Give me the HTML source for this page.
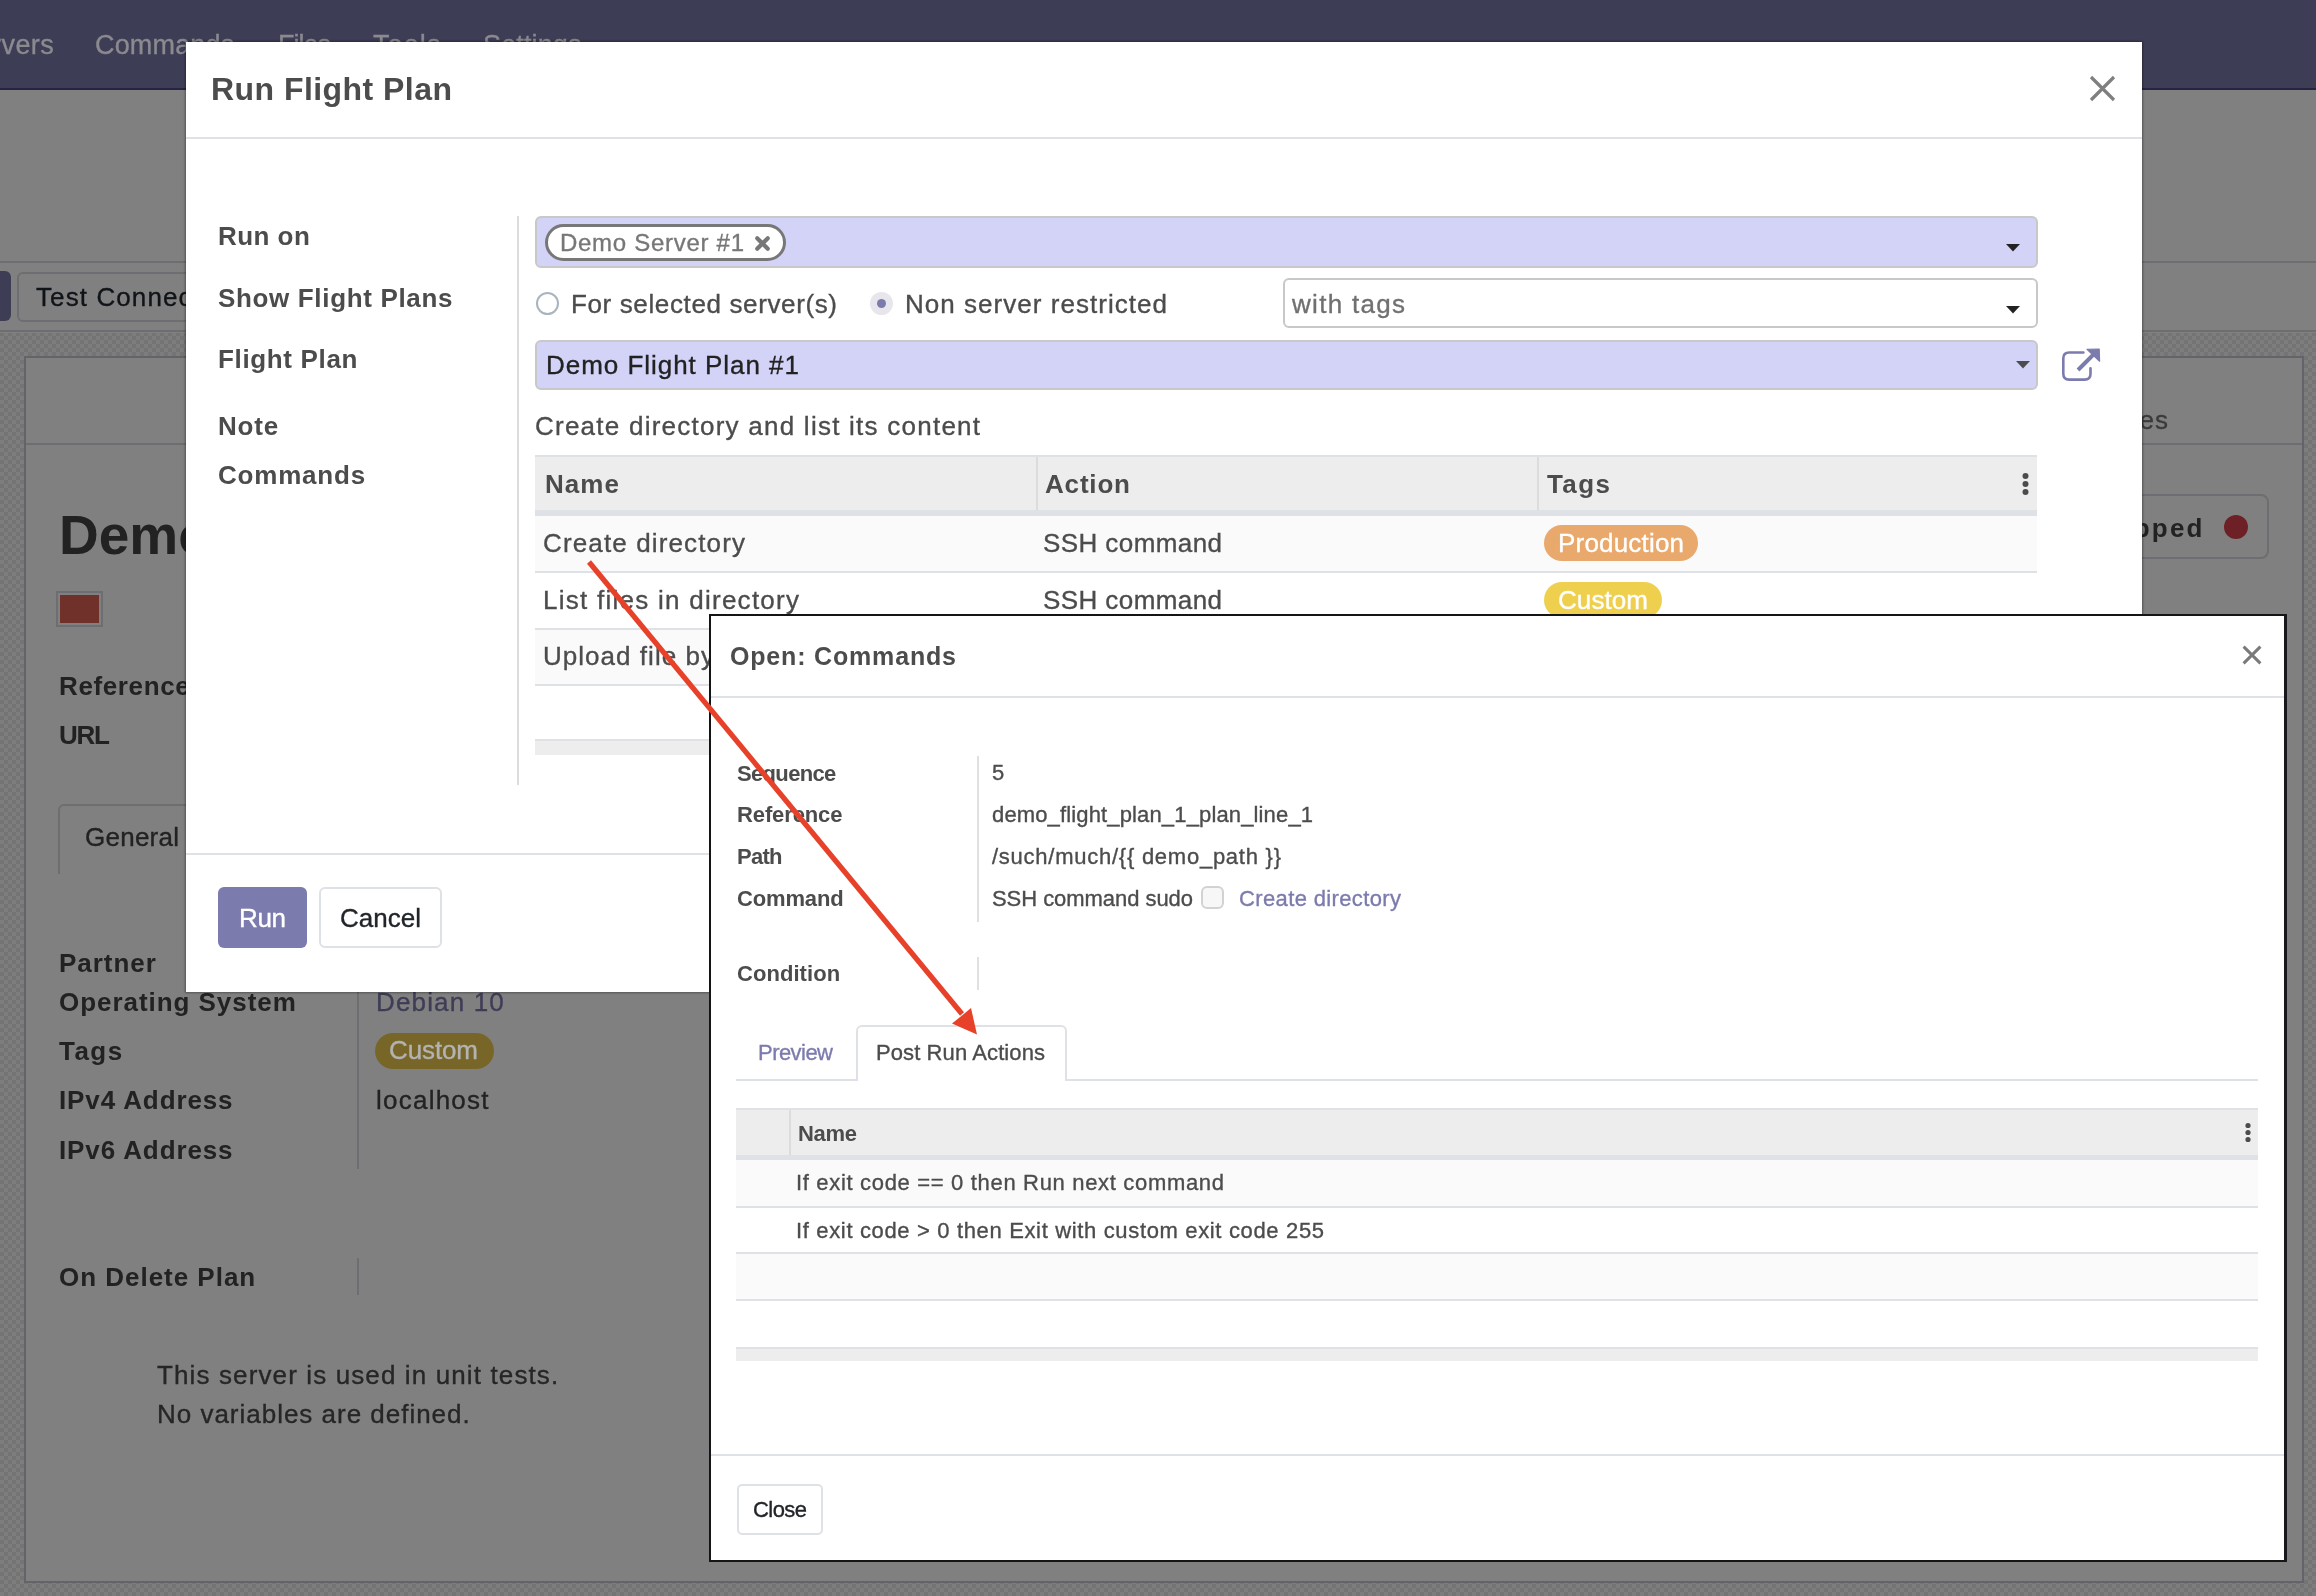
<!DOCTYPE html>
<html><head><meta charset="utf-8"><style>
html,body{margin:0;padding:0;width:2316px;height:1596px;overflow:hidden;}
body{position:relative;font-family:'Liberation Sans', sans-serif;background:#7a7a7a;}
.t{position:absolute;white-space:pre;line-height:normal;will-change:transform;-webkit-text-stroke:0.35px currentColor;}
.a{position:absolute;box-sizing:border-box;}
</style></head><body>
<div class="a" style="left:0px;top:0px;width:2316px;height:1596px;background-color:#787878;background-image:conic-gradient(#747474 25%,#7d7d7d 0 50%,#747474 0 75%,#7d7d7d 0);background-size:8px 8px"></div>
<div class="a" style="left:0px;top:90px;width:2316px;height:243px;background:#808080"></div>
<div class="a" style="left:0px;top:261px;width:2316px;height:2px;background:#6e6e72"></div>
<div class="a" style="left:0px;top:330px;width:2316px;height:2px;background:#6e6e72"></div>
<div class="a" style="left:0px;top:0px;width:2316px;height:90px;background:#3e3d56"></div>
<div class="a" style="left:0px;top:88px;width:2316px;height:2px;background:#262440"></div>
<div class="t" style="left:-8.30px;top:29.56px;font-size:27px;color:#8a8a8f;letter-spacing:0.450px;">rvers</div>
<div class="t" style="left:95.00px;top:29.56px;font-size:27px;color:#8a8a8f;letter-spacing:0.165px;">Commands</div>
<div class="t" style="left:278.00px;top:29.56px;font-size:27px;color:#8a8a8f;letter-spacing:-1.004px;">Files</div>
<div class="t" style="left:373.00px;top:29.56px;font-size:27px;color:#8a8a8f;letter-spacing:1.092px;">Tools</div>
<div class="t" style="left:483.00px;top:29.56px;font-size:27px;color:#8a8a8f;letter-spacing:0.120px;">Settings</div>
<div class="a" style="left:-10px;top:271px;width:21px;height:50px;background:#3e3d56;border-radius:6px"></div>
<div class="a" style="left:17px;top:272px;width:400px;height:50px;border:2px solid #6e6e72;border-radius:6px;background:#808080"></div>
<div class="t" style="left:36.00px;top:282.47px;font-size:26px;color:#101418;letter-spacing:1.097px;">Test Connection</div>
<div class="a" style="left:24px;top:356px;width:2280px;height:1227px;background:#808080;border:2px solid #636369"></div>
<div class="a" style="left:26px;top:443px;width:2276px;height:2px;background:#6e6e72"></div>
<div class="t" style="left:2052.51px;top:404.97px;font-size:26px;color:#3a3a3a;letter-spacing:1.065px;">Variables</div>
<div class="a" style="left:1980px;top:494px;width:289px;height:65px;border:2px solid #6e6e72;border-radius:8px"></div>
<div class="t" style="left:2085.48px;top:513.47px;font-size:26px;color:#222;font-weight:700;-webkit-text-stroke:0;letter-spacing:2.253px;">Stopped</div>
<div class="a" style="left:2224px;top:515px;width:24px;height:24px;background:#6d2126;border-radius:50%"></div>
<div class="t" style="left:59.00px;top:502.73px;font-size:55px;color:#222;font-weight:700;-webkit-text-stroke:0;">Demo Server #1</div>
<div class="a" style="left:56px;top:591px;width:47px;height:36px;border:2px solid #6e6e72;background:#6f3129;box-shadow:inset 0 0 0 2px #808080"></div>
<div class="t" style="left:59.00px;top:670.97px;font-size:26px;color:#222;font-weight:700;-webkit-text-stroke:0;letter-spacing:0.629px;">Reference</div>
<div class="t" style="left:59.00px;top:720.07px;font-size:26px;color:#222;font-weight:700;-webkit-text-stroke:0;letter-spacing:-1.319px;">URL</div>
<div class="a" style="left:58px;top:804px;width:400px;height:70px;border:2px solid #6e6e72;border-bottom:none;border-radius:6px 6px 0 0"></div>
<div class="t" style="left:84.50px;top:822.47px;font-size:26px;color:#222;letter-spacing:0.250px;">General</div>
<div class="t" style="left:58.50px;top:948.47px;font-size:26px;color:#222;font-weight:700;-webkit-text-stroke:0;letter-spacing:0.959px;">Partner</div>
<div class="t" style="left:58.50px;top:987.47px;font-size:26px;color:#222;font-weight:700;-webkit-text-stroke:0;letter-spacing:0.952px;">Operating System</div>
<div class="t" style="left:58.50px;top:1035.97px;font-size:26px;color:#222;font-weight:700;-webkit-text-stroke:0;letter-spacing:1.478px;">Tags</div>
<div class="t" style="left:58.50px;top:1085.47px;font-size:26px;color:#222;font-weight:700;-webkit-text-stroke:0;letter-spacing:0.891px;">IPv4 Address</div>
<div class="t" style="left:58.50px;top:1135.27px;font-size:26px;color:#222;font-weight:700;-webkit-text-stroke:0;letter-spacing:0.891px;">IPv6 Address</div>
<div class="a" style="left:357px;top:935px;width:2px;height:234px;background:#6e6e72"></div>
<div class="t" style="left:375.50px;top:987.47px;font-size:26px;color:#3e3d56;letter-spacing:1.157px;">Debian 10</div>
<div class="a" style="left:375px;top:1033px;width:119px;height:36px;background:#786629;border-radius:18px"></div>
<div class="t" style="left:389.00px;top:1035.47px;font-size:26px;color:#b3b3b3;letter-spacing:-0.116px;">Custom</div>
<div class="t" style="left:375.50px;top:1085.47px;font-size:26px;color:#222;letter-spacing:1.234px;">localhost</div>
<div class="t" style="left:58.50px;top:1262.47px;font-size:26px;color:#222;font-weight:700;-webkit-text-stroke:0;letter-spacing:0.977px;">On Delete Plan</div>
<div class="a" style="left:357px;top:1258px;width:2px;height:37px;background:#6e6e72"></div>
<div class="t" style="left:156.50px;top:1360.47px;font-size:26px;color:#262626;letter-spacing:1.123px;">This server is used in unit tests.</div>
<div class="t" style="left:156.50px;top:1398.97px;font-size:26px;color:#262626;letter-spacing:0.985px;">No variables are defined.</div>
<div class="a" style="left:186px;top:42px;width:1956px;height:950px;background:#fff;box-shadow:0 0 2px 1px rgba(0,0,0,.35)"></div>
<div class="t" style="left:211.00px;top:71.04px;font-size:32px;color:#4c4c4c;font-weight:700;-webkit-text-stroke:0;letter-spacing:0.454px;">Run Flight Plan</div>
<svg class="a" style="left:2088px;top:74px" width="29" height="29"><path d="M3 3L26 26M26 3L3 26" stroke="#7f7f7f" stroke-width="3.2"/></svg>
<div class="a" style="left:186px;top:137px;width:1956px;height:2px;background:#dee2e6"></div>
<div class="t" style="left:218.00px;top:221.47px;font-size:26px;color:#4c4c4c;font-weight:700;-webkit-text-stroke:0;letter-spacing:0.454px;">Run on</div>
<div class="t" style="left:218.00px;top:283.47px;font-size:26px;color:#4c4c4c;font-weight:700;-webkit-text-stroke:0;letter-spacing:0.656px;">Show Flight Plans</div>
<div class="t" style="left:218.00px;top:344.47px;font-size:26px;color:#4c4c4c;font-weight:700;-webkit-text-stroke:0;letter-spacing:0.651px;">Flight Plan</div>
<div class="t" style="left:218.00px;top:411.47px;font-size:26px;color:#4c4c4c;font-weight:700;-webkit-text-stroke:0;letter-spacing:0.840px;">Note</div>
<div class="t" style="left:218.00px;top:460.07px;font-size:26px;color:#4c4c4c;font-weight:700;-webkit-text-stroke:0;letter-spacing:0.803px;">Commands</div>
<div class="a" style="left:517px;top:216px;width:2px;height:569px;background:#dcdcdc"></div>
<div class="a" style="left:535px;top:216px;width:1503px;height:52px;background:#d3d2f7;border:2px solid #c8c8c8;border-radius:6px"></div>
<div class="a" style="left:545px;top:224px;width:241px;height:37px;background:#fff;border:3.6px solid #777;border-radius:18.5px"></div>
<div class="t" style="left:560.00px;top:228.88px;font-size:24px;color:#777;letter-spacing:0.712px;">Demo Server #1</div>
<svg class="a" style="left:754px;top:234.5px" width="17" height="17"><path d="M3.2 3.2L13.8 13.8M13.8 3.2L3.2 13.8" stroke="#777" stroke-width="4.2" stroke-linecap="round"/></svg>
<svg class="a" style="left:2006px;top:244px" width="14" height="8"><path d="M0 0H14L7 7.5Z" fill="#222"/></svg>
<div class="a" style="left:535.5px;top:291.5px;width:23px;height:23px;border:2px solid #a9b4bf;border-radius:50%;background:#fff"></div>
<div class="t" style="left:571.00px;top:289.07px;font-size:26px;color:#4c4c4c;letter-spacing:0.626px;">For selected server(s)</div>
<div class="a" style="left:869.5px;top:291.5px;width:23px;height:23px;background:#e6e6ec;border-radius:50%"></div>
<div class="a" style="left:876.5px;top:298.5px;width:9px;height:9px;background:#7c7bad;border-radius:50%"></div>
<div class="t" style="left:905.00px;top:289.07px;font-size:26px;color:#4c4c4c;letter-spacing:1.034px;">Non server restricted</div>
<div class="a" style="left:1283px;top:278px;width:755px;height:50px;background:#fff;border:2px solid #c8c8c8;border-radius:6px"></div>
<div class="t" style="left:1292.00px;top:289.07px;font-size:26px;color:#707070;letter-spacing:1.299px;">with tags</div>
<svg class="a" style="left:2006px;top:306px" width="14" height="8"><path d="M0 0H14L7 7.5Z" fill="#222"/></svg>
<div class="a" style="left:535px;top:339.5px;width:1503px;height:50px;background:#d3d2f7;border:2px solid #c8c8c8;border-radius:6px"></div>
<div class="t" style="left:546.00px;top:350.47px;font-size:26px;color:#222;letter-spacing:0.969px;">Demo Flight Plan #1</div>
<svg class="a" style="left:2016px;top:361px" width="14" height="8"><path d="M0 0H14L7 7.5Z" fill="#4c4c4c"/></svg>
<svg class="a" style="left:2050px;top:340px" width="60" height="50" viewBox="0 0 60 50"><path d="M33.4 12.5H19.2Q13.3 12.5 13.3 18.4V33.8Q13.3 39.6 19.2 39.6H34.6Q40.5 39.6 40.5 33.8V28.2" fill="none" stroke="#7c7bad" stroke-width="2.6" stroke-linecap="round"/><path d="M28 30L44 14" stroke="#7c7bad" stroke-width="3.9"/><path d="M37 9.4L49.2 9L49.6 21.2Z" fill="#7c7bad" stroke="#7c7bad" stroke-width="1.2" stroke-linejoin="round"/></svg>
<div class="t" style="left:535.00px;top:410.97px;font-size:26px;color:#4c4c4c;letter-spacing:1.242px;">Create directory and list its content</div>
<div class="a" style="left:535px;top:455px;width:1502px;height:55px;background:#ededed;border-top:2px solid #dee2e6"></div>
<div class="a" style="left:1036px;top:457px;width:2px;height:53px;background:#dcdcdc"></div>
<div class="a" style="left:1537px;top:457px;width:2px;height:53px;background:#dcdcdc"></div>
<div class="a" style="left:535px;top:510px;width:1502px;height:6px;background:#dee2e6"></div>
<div class="t" style="left:545.00px;top:469.47px;font-size:26px;color:#4c4c4c;font-weight:700;-webkit-text-stroke:0;letter-spacing:1.057px;">Name</div>
<div class="t" style="left:1045.00px;top:469.47px;font-size:26px;color:#4c4c4c;font-weight:700;-webkit-text-stroke:0;letter-spacing:0.822px;">Action</div>
<div class="t" style="left:1547.00px;top:469.47px;font-size:26px;color:#4c4c4c;font-weight:700;-webkit-text-stroke:0;letter-spacing:1.411px;">Tags</div>
<svg class="a" style="left:2021px;top:472px" width="9" height="24"><circle cx="4.5" cy="4" r="3" fill="#4c4c4c"/><circle cx="4.5" cy="12" r="3" fill="#4c4c4c"/><circle cx="4.5" cy="20" r="3" fill="#4c4c4c"/></svg>
<div class="a" style="left:535px;top:516px;width:1502px;height:56px;background:#fafafa"></div>
<div class="a" style="left:535px;top:571px;width:1502px;height:2px;background:#dee2e6"></div>
<div class="a" style="left:535px;top:628px;width:1502px;height:2px;background:#dee2e6"></div>
<div class="a" style="left:535px;top:630px;width:1502px;height:54px;background:#fafafa"></div>
<div class="a" style="left:535px;top:684px;width:1502px;height:2px;background:#dee2e6"></div>
<div class="a" style="left:535px;top:739px;width:1502px;height:16px;background:#ededed;border-top:2px solid #dee2e6"></div>
<div class="t" style="left:543.00px;top:528.47px;font-size:26px;color:#4c4c4c;letter-spacing:1.135px;">Create directory</div>
<div class="t" style="left:1043.00px;top:528.47px;font-size:26px;color:#4c4c4c;letter-spacing:0.416px;">SSH command</div>
<div class="a" style="left:1544px;top:525px;width:154px;height:36px;background:#e9a86c;border-radius:18px"></div>
<div class="t" style="left:1558.00px;top:528.47px;font-size:26px;color:#fff;letter-spacing:0.188px;">Production</div>
<div class="t" style="left:543.00px;top:585.17px;font-size:26px;color:#4c4c4c;letter-spacing:1.259px;">List files in directory</div>
<div class="t" style="left:1043.00px;top:585.17px;font-size:26px;color:#4c4c4c;letter-spacing:0.416px;">SSH command</div>
<div class="a" style="left:1544px;top:582px;width:118px;height:36px;background:#efd04e;border-radius:18px"></div>
<div class="t" style="left:1558.00px;top:585.17px;font-size:26px;color:#fff;letter-spacing:0.084px;">Custom</div>
<div class="t" style="left:543.00px;top:641.27px;font-size:26px;color:#4c4c4c;letter-spacing:1.035px;">Upload file by SCP</div>
<div class="a" style="left:186px;top:853px;width:1956px;height:2px;background:#dee2e6"></div>
<div class="a" style="left:218px;top:887px;width:89px;height:61px;background:#7c7bad;border-radius:6px"></div>
<div class="t" style="left:239.00px;top:903.47px;font-size:26px;color:#fff;letter-spacing:-0.352px;">Run</div>
<div class="a" style="left:319px;top:887px;width:123px;height:61px;background:#fff;border:2px solid #dee2e6;border-radius:6px"></div>
<div class="t" style="left:340.00px;top:903.47px;font-size:26px;color:#212529;letter-spacing:0.013px;">Cancel</div>
<div class="a" style="left:709px;top:614px;width:1578px;height:948px;background:#fff;border:2px solid #151515;border-right:3px solid #18181c"></div>
<div class="t" style="left:730.00px;top:642.38px;font-size:25px;color:#4c4c4c;font-weight:700;-webkit-text-stroke:0;letter-spacing:0.823px;">Open: Commands</div>
<svg class="a" style="left:2241px;top:644px" width="22" height="22"><path d="M2.6 2.6L19.4 19.4M19.4 2.6L2.6 19.4" stroke="#7a7a7a" stroke-width="3"/></svg>
<div class="a" style="left:711px;top:696px;width:1573px;height:2px;background:#dee2e6"></div>
<div class="t" style="left:736.50px;top:760.69px;font-size:22px;color:#4c4c4c;font-weight:700;-webkit-text-stroke:0;letter-spacing:-0.663px;">Sequence</div>
<div class="t" style="left:736.50px;top:802.09px;font-size:22px;color:#4c4c4c;font-weight:700;-webkit-text-stroke:0;letter-spacing:-0.124px;">Reference</div>
<div class="t" style="left:736.50px;top:843.59px;font-size:22px;color:#4c4c4c;font-weight:700;-webkit-text-stroke:0;letter-spacing:-0.763px;">Path</div>
<div class="t" style="left:736.50px;top:885.89px;font-size:22px;color:#4c4c4c;font-weight:700;-webkit-text-stroke:0;letter-spacing:-0.144px;">Command</div>
<div class="t" style="left:736.50px;top:961.09px;font-size:22px;color:#4c4c4c;font-weight:700;-webkit-text-stroke:0;letter-spacing:0.057px;">Condition</div>
<div class="a" style="left:977px;top:756px;width:2px;height:166px;background:#e0e0e0"></div>
<div class="a" style="left:977px;top:957px;width:2px;height:33px;background:#e0e0e0"></div>
<div class="t" style="left:992.00px;top:760.49px;font-size:22px;color:#4c4c4c;">5</div>
<div class="t" style="left:992.00px;top:802.29px;font-size:22px;color:#4c4c4c;letter-spacing:0.144px;">demo_flight_plan_1_plan_line_1</div>
<div class="t" style="left:992.00px;top:844.09px;font-size:22px;color:#4c4c4c;letter-spacing:0.748px;">/such/much/{{ demo_path }}</div>
<div class="t" style="left:992.00px;top:885.89px;font-size:22px;color:#4c4c4c;letter-spacing:-0.051px;">SSH command sudo</div>
<div class="a" style="left:1200.5px;top:885.5px;width:23px;height:23px;background:#f7f7f7;border:2px solid #d2d2d2;border-radius:6px"></div>
<div class="t" style="left:1239.00px;top:885.89px;font-size:22px;color:#7c7bad;letter-spacing:0.366px;">Create directory</div>
<div class="a" style="left:736px;top:1079px;width:1522px;height:2px;background:#dee2e6"></div>
<div class="a" style="left:855.5px;top:1024.5px;width:211px;height:56.5px;background:#fff;border:2px solid #dee2e6;border-bottom:none;border-radius:6px 6px 0 0"></div>
<div class="t" style="left:758.00px;top:1040.49px;font-size:22px;color:#7c7bad;letter-spacing:-0.542px;">Preview</div>
<div class="t" style="left:876.00px;top:1040.49px;font-size:22px;color:#4c4c4c;letter-spacing:0.097px;">Post Run Actions</div>
<div class="a" style="left:736px;top:1108px;width:1522px;height:47px;background:#ededed;border-top:2px solid #dee2e6"></div>
<div class="a" style="left:789px;top:1110px;width:2px;height:45px;background:#dcdcdc"></div>
<div class="a" style="left:736px;top:1155px;width:1522px;height:5px;background:#dee2e6"></div>
<div class="t" style="left:798.00px;top:1120.89px;font-size:22px;color:#4c4c4c;font-weight:700;-webkit-text-stroke:0;letter-spacing:-0.307px;">Name</div>
<svg class="a" style="left:2244px;top:1122px" width="8" height="21"><circle cx="4" cy="3.5" r="2.6" fill="#4c4c4c"/><circle cx="4" cy="10.5" r="2.6" fill="#4c4c4c"/><circle cx="4" cy="17.5" r="2.6" fill="#4c4c4c"/></svg>
<div class="a" style="left:736px;top:1160px;width:1522px;height:46px;background:#fafafa"></div>
<div class="a" style="left:736px;top:1206px;width:1522px;height:2px;background:#dee2e6"></div>
<div class="a" style="left:736px;top:1252px;width:1522px;height:2px;background:#dee2e6"></div>
<div class="a" style="left:736px;top:1254px;width:1522px;height:45px;background:#fafafa"></div>
<div class="a" style="left:736px;top:1299px;width:1522px;height:2px;background:#dee2e6"></div>
<div class="a" style="left:736px;top:1347px;width:1522px;height:14px;background:#ededed;border-top:2px solid #dee2e6"></div>
<div class="t" style="left:796.00px;top:1170.09px;font-size:22px;color:#4c4c4c;letter-spacing:0.675px;">If exit code == 0 then Run next command</div>
<div class="t" style="left:796.00px;top:1218.39px;font-size:22px;color:#4c4c4c;letter-spacing:0.654px;">If exit code &gt; 0 then Exit with custom exit code 255</div>
<div class="a" style="left:711px;top:1454px;width:1573px;height:2px;background:#dee2e6"></div>
<div class="a" style="left:737px;top:1483.5px;width:86px;height:51px;background:#fff;border:2px solid #dee2e6;border-radius:5px"></div>
<div class="t" style="left:753.00px;top:1497.09px;font-size:22px;color:#212529;letter-spacing:-0.562px;">Close</div>
<svg class="a" style="left:0;top:0" width="2316" height="1596"><path d="M589 562L962 1014" stroke="#e7412a" stroke-width="5.2" stroke-linecap="butt"/><path d="M977 1034.6L952 1023.4L962 1015.5L971 1008Z" fill="#e7412a"/></svg>
</body></html>
